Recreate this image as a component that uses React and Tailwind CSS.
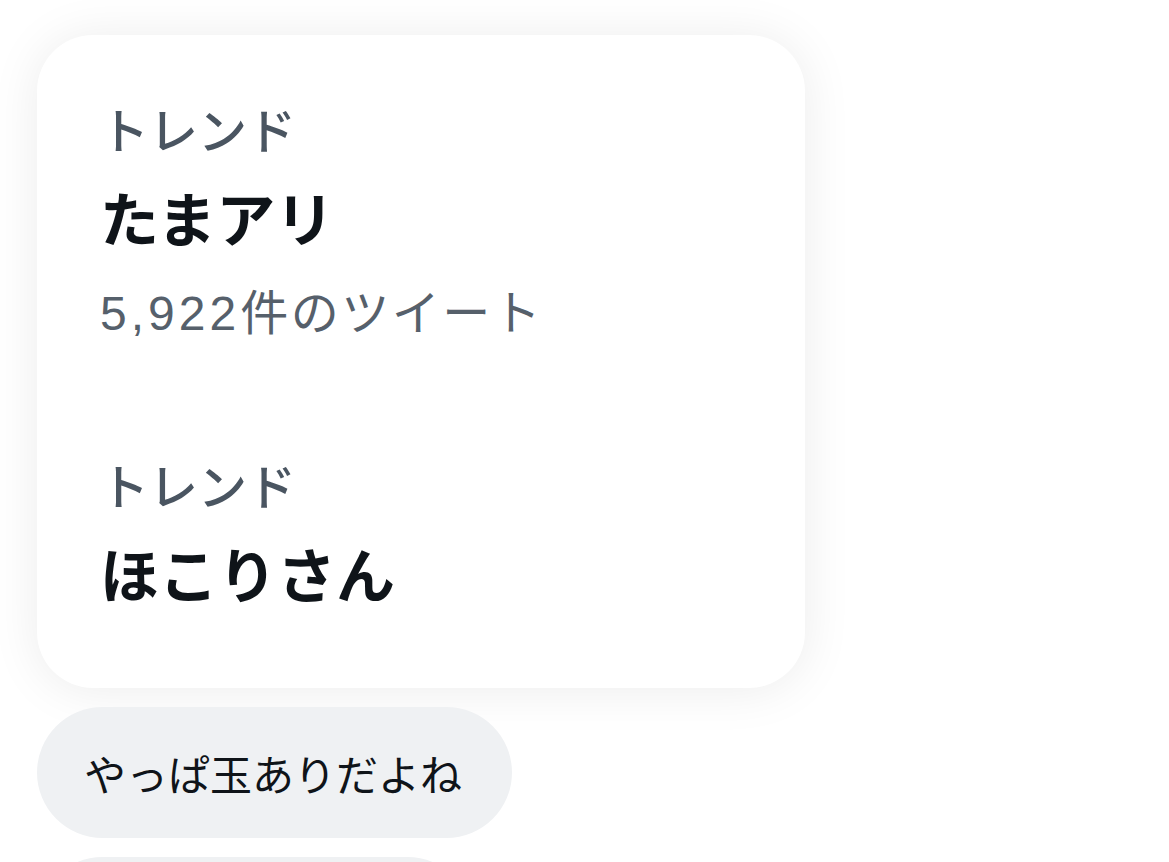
import React from 'react';

const trends = [
  { label: 'トレンド', title: 'たまアリ', num: '5,922', rest: '件のツイート' },
  { label: 'トレンド', title: 'ほこりさん' },
];

const App = () => {
  return (
    <div
      className="h-[862px] w-[1169px] overflow-hidden bg-white"
      style={{ fontFamily: '"Noto Sans CJK JP", "Noto Sans", sans-serif' }}
    >
      <div className="flex flex-col items-start pl-[37px] pt-[35px]">
        <div className="w-[768px] rounded-[56px] bg-white pl-[63px] pt-[49px] pb-[70px] shadow-[0_2px_50px_rgba(0,0,0,0.08)]">
          {trends.map((t, i) => (
            <div key={i} className={i > 0 ? 'mt-[84px]' : ''}>
              <div className="text-[49px] leading-[88px] font-medium text-[#4a5561]">{t.label}</div>
              <div className="text-[59px] leading-[90px] font-bold text-[#0f1419]">{t.title}</div>
              {t.num && (
                <div className="h-[94px] text-[48px] leading-[94px] tracking-[2.5px] text-[#56606b]">
                  <span className="tracking-[4px]" style={{ fontFamily: '"Liberation Sans", sans-serif' }}>
                    {t.num}
                  </span>
                  {t.rest}
                </div>
              )}
            </div>
          ))}
        </div>

        <div className="mt-[19px] flex h-[131px] items-center rounded-full bg-[#eff1f3] pl-[47px] pr-[50px]">
          <span className="text-[42px] text-[#0f1419]">やっぱ玉ありだよね</span>
        </div>

        <div className="mt-[19px] h-[131px] w-[436px] rounded-full bg-[#eff1f3]" />
      </div>
    </div>
  );
};

export default App;
